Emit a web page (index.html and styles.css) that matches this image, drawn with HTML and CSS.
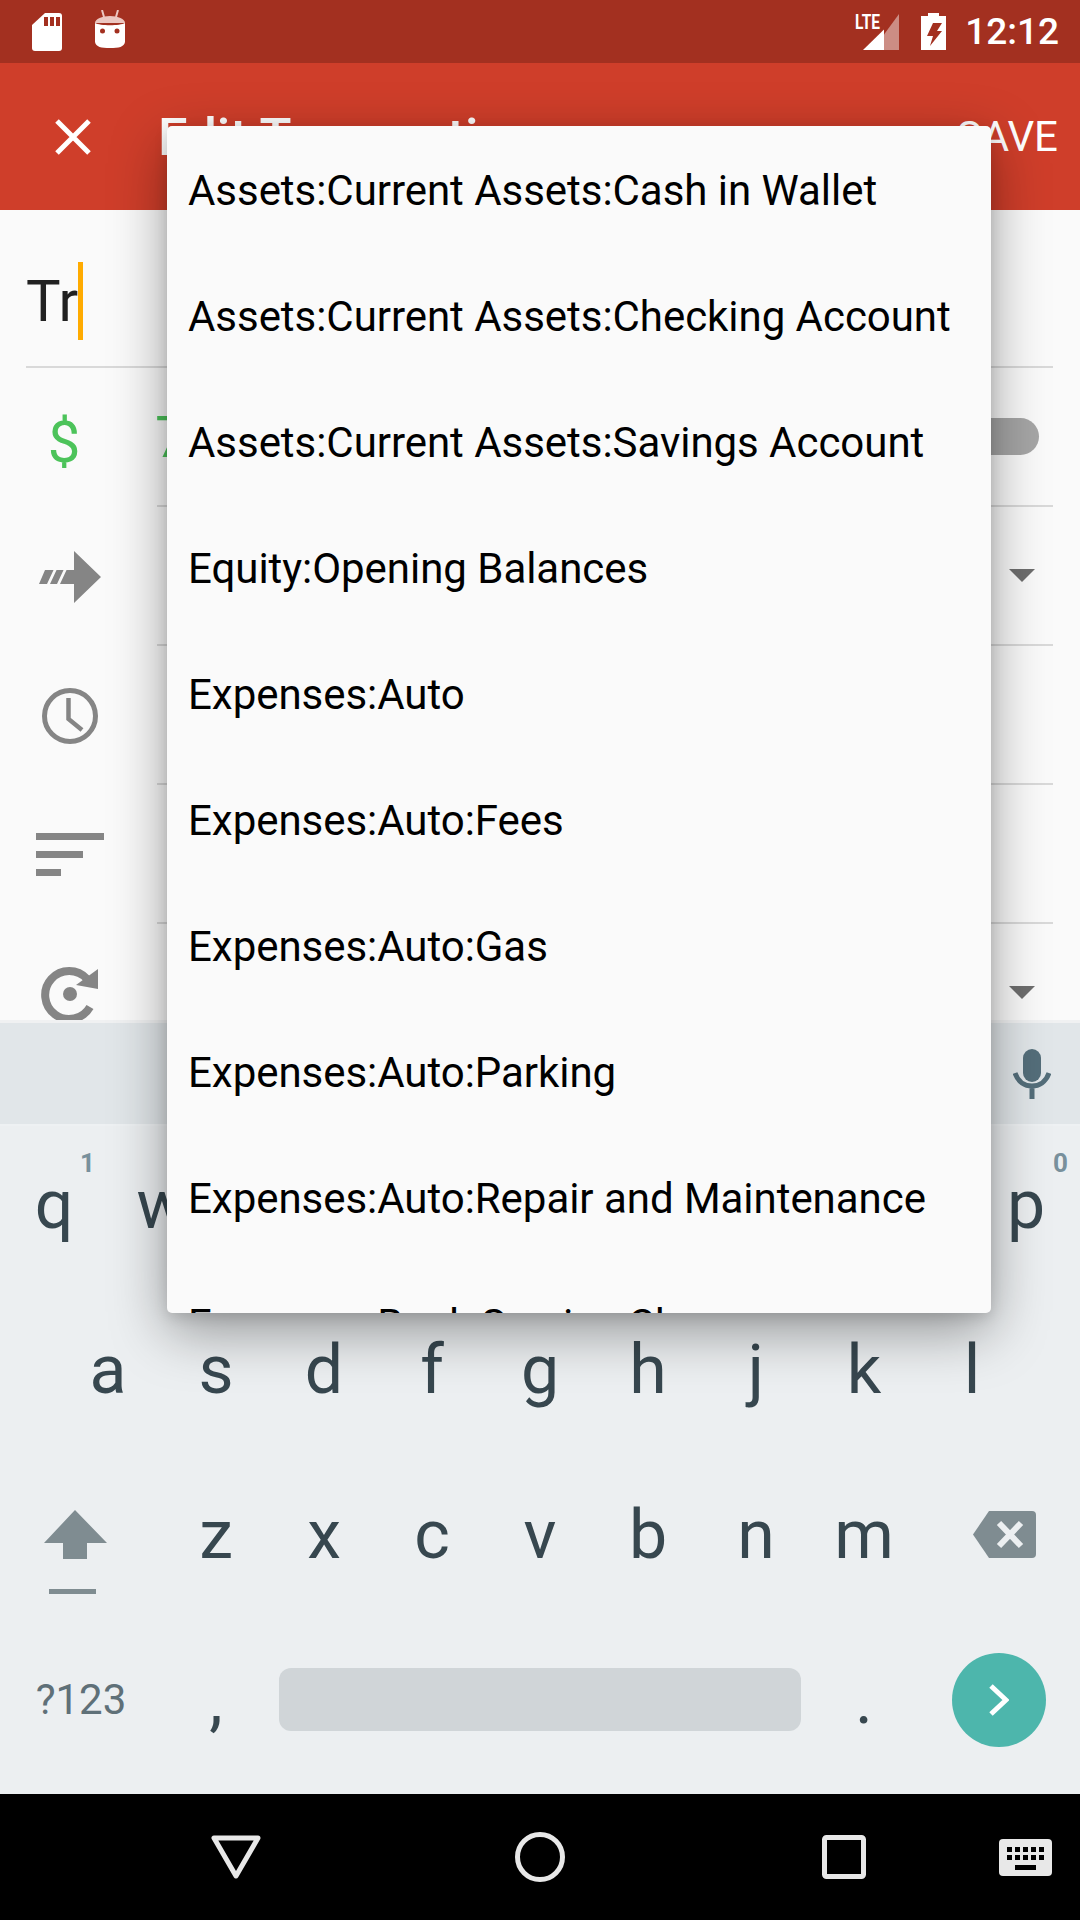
FILE: index.html
```html
<!DOCTYPE html>
<html lang="en">
<head>
    <meta charset="UTF-8">
    <meta name="viewport" content="width=device-width, initial-scale=1.0">
    <title>Edit Transaction</title>
    <link rel="stylesheet" href="styles.css">
</head>

<body>
    <div class="screen">
        <div class="status-bar">
            <div class="status-left">
                <svg width="30" height="38" viewBox="0 0 30 38"><path fill="#fff" d="M13 0H27a3 3 0 0 1 3 3V35a3 3 0 0 1-3 3H3a3 3 0 0 1-3-3V12z"/><path fill="#a33020" d="M12 4h4v9h-4zM18 4h4v9h-4zM24 4h4v9h-4z"/></svg>
                <svg class="debug-icon" width="30" height="38" viewBox="0 0 30 38"><path fill="none" stroke="#ecc6c0" stroke-width="2" d="M7 0l2 7M23 0l-2 7"/><path fill="#ecc6c0" d="M0 13c0-4 7-7 15-7s15 3 15 7z"/><path fill="#fff" d="M0 13c5 3 25 3 30 0c0 8 1 14 0 19c-1 5-6 6-15 6s-14-1-15-6c-1-5 0-11 0-19z"/><circle cx="7.500" cy="21" r="2.500" fill="#a33020"/><circle cx="22" cy="21" r="2.500" fill="#a33020"/></svg>
            </div>
            <div class="status-right">
                <svg width="46" height="37" viewBox="0 0 46 37"><text x="1" y="16" class="lte-text" textLength="25" lengthAdjust="spacingAndGlyphs">LTE</text><path fill="#fff" fill-opacity=".45" d="M30 21.500L45 1v36H30z"/><path fill="#fff" d="M9 37L30 16.500V37z"/></svg>
                <svg class="battery-icon" width="25" height="37" viewBox="0 0 25 37"><path fill="#fff" fill-rule="evenodd" d="M7 0h11v3h7v34H0V3h7zM12 10H21L16 18H21L9 33L12 23H6z"/></svg>
                <span class="status-time">12:12</span>
            </div>
        </div>

        <div class="toolbar">
            <svg class="close-icon" width="36" height="36" viewBox="0 0 36 36"><path stroke="#fff" stroke-width="5" d="M2 2L34 34M34 2L2 34"/></svg>
            <span class="toolbar-title">Edit Transaction</span>
            <span class="toolbar-save">SAVE</span>
        </div>

        <div class="form">
            <div class="title-row">
                <span class="title-input">Tr</span><span class="caret"></span>
            </div>
            <div class="field-row">
                <div class="field-icon dollar">$</div>
                <div class="field-main">
                    <span class="amount">7</span>
                    <span class="toggle"></span>
                </div>
            </div>
            <div class="field-row">
                <div class="field-icon">
                    <svg width="62" height="52" viewBox="0 0 62 52"><path fill="#858585" d="M35 0L62 26L35 52V33H0L6 19H35z"/><path fill="#fafafa" d="M8 33L15 18h3L11 33zM18 33L25 18h3L21 33z"/></svg>
                </div>
                <div class="field-main">
                    <span></span>
                    <span class="dropdown-arrow"></span>
                </div>
            </div>
            <div class="field-row">
                <div class="field-icon">
                    <svg width="56" height="56" viewBox="0 0 56 56"><circle cx="28" cy="28" r="25.500" fill="none" stroke="#858585" stroke-width="5"/><path fill="none" stroke="#858585" stroke-width="4.500" d="M26.500 10V31L40 42"/></svg>
                </div>
                <div class="field-main"></div>
            </div>
            <div class="field-row">
                <div class="field-icon">
                    <div class="sort-icon">
                        <span class="sort-long"></span>
                        <span class="sort-mid"></span>
                        <span class="sort-short"></span>
                    </div>
                </div>
                <div class="field-main"></div>
            </div>
            <div class="field-row">
                <div class="field-icon">
                    <svg width="60" height="60" viewBox="0 0 60 60"><path fill="none" stroke="#858585" stroke-width="8" d="M47 15A24 24 0 1 0 50 43"/><circle cx="30" cy="30" r="7" fill="#858585"/><path fill="#858585" d="M58 5V25L36 21z"/></svg>
                </div>
                <div class="field-main">
                    <span></span>
                    <span class="dropdown-arrow"></span>
                </div>
            </div>
        </div>

        <div class="keyboard">
            <div class="suggestions">
                <svg width="38" height="50" viewBox="0 0 38 50"><rect x="10" y="0" width="18" height="33" rx="9" fill="#546e7a"/><path fill="none" stroke="#546e7a" stroke-width="5" d="M2 24c3 9 10 13 17 13s14-4 17-13M19 37V50"/></svg>
            </div>
            <div class="key-row">
                <div class="key">q<span class="key-hint hint-near">1</span></div>
                <div class="key">w</div>
                <div class="key">e</div>
                <div class="key">r</div>
                <div class="key">t</div>
                <div class="key">y</div>
                <div class="key">u</div>
                <div class="key">i</div>
                <div class="key">o</div>
                <div class="key">p<span class="key-hint">0</span></div>
            </div>
            <div class="key-row row-inset">
                <div class="key">a</div>
                <div class="key">s</div>
                <div class="key">d</div>
                <div class="key">f</div>
                <div class="key">g</div>
                <div class="key">h</div>
                <div class="key">j</div>
                <div class="key">k</div>
                <div class="key">l</div>
            </div>
            <div class="key-row">
                <div class="key key-wide">
                    <svg class="shift-icon" width="63" height="84" viewBox="0 0 63 84"><path fill="#7f8c91" d="M31 0L63 33H43V49H19V33H0z"/><rect x="5" y="79" width="47" height="5" fill="#7f8c91"/></svg>
                </div>
                <div class="key">z</div>
                <div class="key">x</div>
                <div class="key">c</div>
                <div class="key">v</div>
                <div class="key">b</div>
                <div class="key">n</div>
                <div class="key">m</div>
                <div class="key key-wide">
                    <svg class="backspace-icon" width="63" height="47" viewBox="0 0 63 47"><path fill="#7f8c91" d="M16 0H59a4 4 0 0 1 4 4V43a4 4 0 0 1-4 4H16L0 23.500z"/><path stroke="#eceff1" stroke-width="6" d="M26 12L48 35M48 12L26 35"/></svg>
                </div>
            </div>
            <div class="key-row">
                <div class="key key-wide key-symbols">?123</div>
                <div class="key">,</div>
                <div class="key-space"><span class="space-bar"></span></div>
                <div class="key">.</div>
                <div class="key key-wide">
                    <span class="enter-key">
                        <svg width="20" height="32" viewBox="0 0 20 32"><path fill="none" stroke="#fff" stroke-width="5" d="M2 2L17 16L2 30"/></svg>
                    </span>
                </div>
            </div>
        </div>

        <div class="nav-bar">
            <svg class="nav-back" width="50" height="44" viewBox="0 0 50 44"><path fill="none" stroke="#e8e8e8" stroke-width="5" stroke-linejoin="round" d="M3 3H47L25 41z"/></svg>
            <svg class="nav-home" width="50" height="50" viewBox="0 0 50 50"><circle cx="25" cy="25" r="22.500" fill="none" stroke="#e8e8e8" stroke-width="5"/></svg>
            <svg class="nav-recent" width="44" height="44" viewBox="0 0 44 44"><rect x="2.500" y="2.500" width="39" height="39" rx="2" fill="none" stroke="#e8e8e8" stroke-width="5"/></svg>
            <svg class="nav-keyboard" width="53" height="37" viewBox="0 0 53 37"><rect width="53" height="37" rx="4" fill="#e8e8e8"/><path fill="#000" d="M8 8h5v5H8zM16 8h5v5h-5zM24 8h5v5h-5zM32 8h5v5h-5zM40 8h5v5h-5zM8 16h5v5H8zM16 16h5v5h-5zM24 16h5v5h-5zM32 16h5v5h-5zM40 16h5v5h-5zM16 26h21v5H16z"/></svg>
        </div>

        <div class="account-popup">
            <div class="popup-item">Assets:Current Assets:Cash in Wallet</div>
            <div class="popup-item">Assets:Current Assets:Checking Account</div>
            <div class="popup-item">Assets:Current Assets:Savings Account</div>
            <div class="popup-item">Equity:Opening Balances</div>
            <div class="popup-item">Expenses:Auto</div>
            <div class="popup-item">Expenses:Auto:Fees</div>
            <div class="popup-item">Expenses:Auto:Gas</div>
            <div class="popup-item">Expenses:Auto:Parking</div>
            <div class="popup-item">Expenses:Auto:Repair and Maintenance</div>
            <div class="popup-item">Expenses:Bank Service Charge</div>
        </div>
    </div>
</body>
</html>
```

FILE: styles.css
```css
body {
    font-family: Roboto, "Noto Sans", sans-serif;
    margin: 0;
    padding: 0;
    background-color: #000;
}

.screen {
    position: relative;
    width: 1080px;
    height: 1920px;
    display: flex;
    flex-direction: column;
    overflow: hidden;
    background-color: #fafafa;
}

.status-bar {
    height: 63px;
    flex-shrink: 0;
    display: flex;
    justify-content: space-between;
    align-items: center;
    background-color: #a33020;
    padding: 0 21px 0 32px;
}

.status-left {
    display: flex;
    gap: 33px;
    align-items: center;
}

.debug-icon {
    margin-bottom: 5px;
}

.status-right {
    display: flex;
    align-items: center;
}

.lte-text {
    font-family: Roboto, sans-serif;
    font-size: 21px;
    font-weight: 700;
    fill: #fff;
}

.battery-icon {
    margin-left: 21px;
}

.status-time {
    margin-left: 19px;
    font-size: 37px;
    font-weight: 500;
    color: #fff;
}

.toolbar {
    height: 147px;
    flex-shrink: 0;
    display: flex;
    align-items: center;
    background-color: #cf3e2a;
    color: #fff;
    padding: 0 22px 0 55px;
}

.toolbar-title {
    margin-left: 67px;
    font-size: 52.5px;
    font-weight: 500;
}

.toolbar-save {
    margin-left: auto;
    font-size: 42px;
    font-weight: 400;
}

.form {
    flex: 1;
    overflow: hidden;
}

.title-row {
    height: 158px;
    box-sizing: border-box;
    margin: 0 27px 0 26px;
    padding-top: 26px;
    display: flex;
    align-items: center;
    border-bottom: 2px solid #d9d9d9;
}

.title-input {
    font-size: 58px;
    color: #212121;
}

.caret {
    width: 5px;
    height: 78px;
    background-color: #ffab00;
}

.field-row {
    height: 139px;
    display: flex;
}

.field-icon {
    width: 157px;
    flex-shrink: 0;
    display: flex;
    justify-content: center;
    align-items: center;
    padding-right: 17px;
    box-sizing: border-box;
}

.dollar {
    font-size: 58px;
    color: #4cc35a;
    padding: 8px 29px 0 0;
}

.field-main {
    flex: 1;
    margin-right: 27px;
    display: flex;
    justify-content: space-between;
    align-items: center;
    border-bottom: 2px solid #d9d9d9;
    box-sizing: border-box;
}

.amount {
    margin-left: -2px;
    font-size: 58px;
    color: #4cc35a;
}

.toggle {
    width: 70px;
    height: 37px;
    margin-right: 14px;
    border-radius: 19px;
    background-color: #a6a6a6;
}

.dropdown-arrow {
    width: 0;
    height: 0;
    margin-right: 18px;
    border-left: 13px solid transparent;
    border-right: 13px solid transparent;
    border-top: 13px solid #6e6e6e;
}

.sort-icon {
    display: flex;
    flex-direction: column;
    gap: 11px;
    width: 68px;
}

.sort-icon span {
    display: block;
    height: 7px;
    background-color: #858585;
}

.sort-mid {
    width: 47px;
}

.sort-short {
    width: 25px;
}

.keyboard {
    height: 774px;
    flex-shrink: 0;
    box-sizing: border-box;
    background-color: #eceff1;
    border-top: 3px solid #f0f1f2;
}

.suggestions {
    height: 103px;
    box-sizing: border-box;
    display: flex;
    justify-content: flex-end;
    align-items: center;
    padding-right: 29px;
    background-color: #e1e6e9;
    border-bottom: 2px solid #eef1f3;
}

.key-row {
    height: 165px;
    box-sizing: border-box;
    padding-bottom: 8px;
    display: flex;
}

.row-inset {
    padding: 0 54px 8px;
}

.key {
    position: relative;
    flex: 1;
    display: flex;
    justify-content: center;
    align-items: center;
    font-size: 68px;
    color: #37474f;
}

.key-wide {
    flex: none;
    width: 162px;
}

.key-hint {
    position: absolute;
    top: 22px;
    right: 12px;
    font-size: 26px;
    font-weight: 700;
    color: #78909c;
}

.hint-near {
    right: 13px;
}

.shift-icon {
    margin: 35px 12px 0 0;
}

.backspace-icon {
    margin-left: 11px;
}

.key-symbols {
    font-size: 42px;
    color: #5f7078;
}

.key-space {
    width: 540px;
    flex: none;
    display: flex;
    align-items: center;
    padding: 0 9px;
    box-sizing: border-box;
}

.space-bar {
    display: block;
    width: 100%;
    height: 63px;
    border-radius: 12px;
    background-color: #d0d5d8;
}

.enter-key {
    width: 94px;
    height: 94px;
    border-radius: 50%;
    display: flex;
    justify-content: center;
    align-items: center;
    background-color: #4db6ac;
}

.nav-bar {
    height: 126px;
    flex-shrink: 0;
    display: flex;
    align-items: center;
    background-color: #000;
    padding-left: 211px;
}

.nav-home {
    margin-left: 254px;
}

.nav-recent {
    margin-left: 257px;
}

.nav-keyboard {
    margin-left: 133px;
}

.account-popup {
    position: absolute;
    top: 126px;
    left: 167px;
    width: 824px;
    height: 1187px;
    overflow: hidden;
    border-radius: 5px;
    background-color: #fafafa;
    box-shadow: 0 18px 56px rgba(0, 0, 0, 0.38), 0 4px 14px rgba(0, 0, 0, 0.12);
}

.popup-item {
    height: 126px;
    box-sizing: border-box;
    padding: 3px 21px 0;
    display: flex;
    align-items: center;
    font-size: 42px;
    letter-spacing: -0.04px;
    white-space: nowrap;
    color: #000;
}
```
